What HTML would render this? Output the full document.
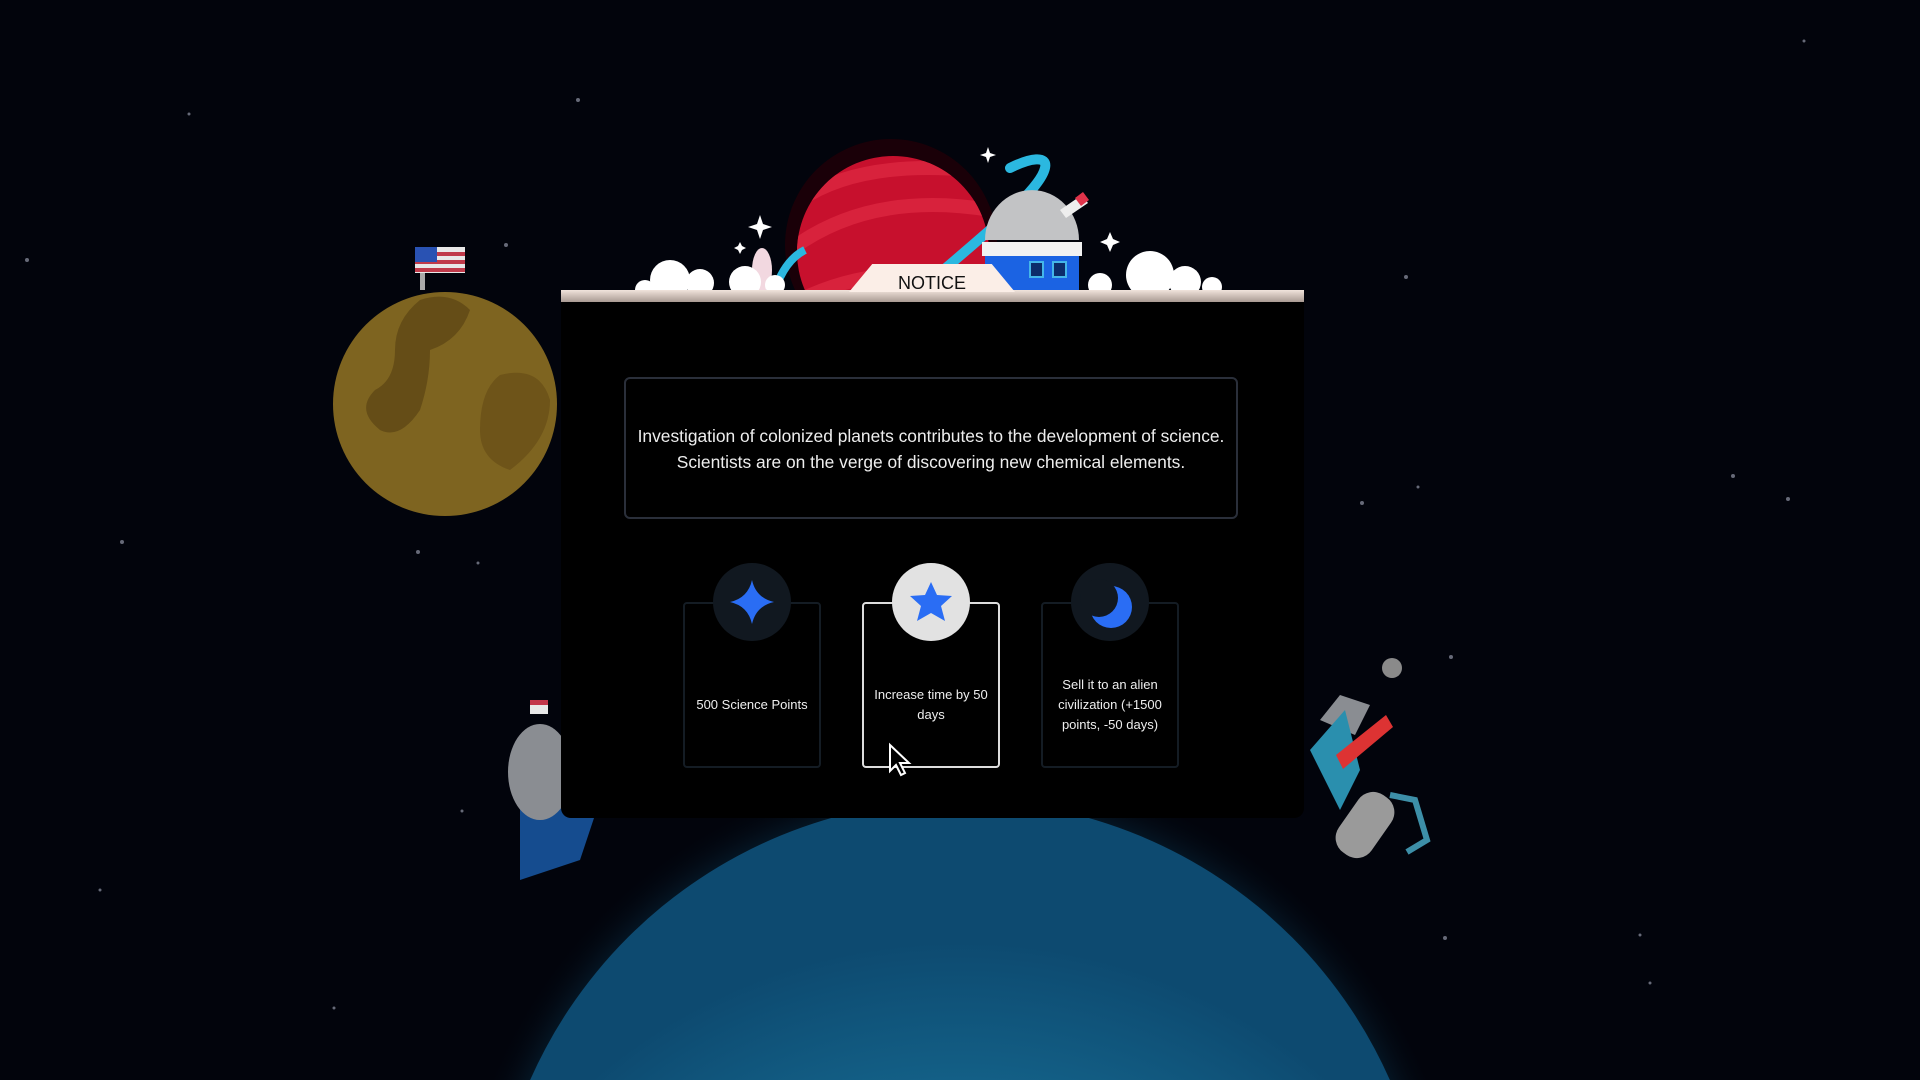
<!DOCTYPE html>
<html><head><meta charset="utf-8"><style>
html,body{margin:0;padding:0;width:1920px;height:1080px;overflow:hidden;background:#02040c;font-family:"Liberation Sans",sans-serif;position:relative}
svg{position:absolute;left:0;top:0;display:block}
.modal{position:absolute;left:561px;top:302px;width:743px;height:516px;background:#000;border-radius:0 0 10px 10px}
.bar{position:absolute;left:561px;top:290px;width:743px;height:12px;background:linear-gradient(#f1e4dc,#a99a92)}
.tab{position:absolute;left:849px;top:264px;width:166px;height:28px;background:#fbeee7;clip-path:polygon(14% 0,86% 0,100% 100%,0 100%);text-align:center;font-size:18px;line-height:38px;color:#111}
.text{position:absolute;left:624px;top:377px;width:614px;height:142px;border:2px solid #2a2f3a;border-radius:6px;box-sizing:border-box;color:#eee;font-size:17.4px;line-height:26px;text-align:center;padding-top:44px}
.card{position:absolute;top:602px;width:138px;height:166px;border:2px solid #141c24;border-radius:4px;box-sizing:border-box;color:#eee;font-size:13px;line-height:20px;text-align:center;display:flex;align-items:center;justify-content:center;padding:40px 8px 0}
.card.sel{border-color:#ddd}
.circ{position:absolute;top:563px;width:78px;height:78px;border-radius:50%;background:#111820}
</style></head><body>
<svg width="1920" height="1080" viewBox="0 0 1920 1080">
<defs><radialGradient id="eg" cx="50%" cy="75%" r="60%"><stop offset="0.3" stop-color="#1e86ae"/><stop offset="1" stop-color="#0d4a70"/></radialGradient>
<radialGradient id="gl"><stop offset="0.88" stop-color="#0b3a55" stop-opacity=".7"/><stop offset="1" stop-color="#02040c" stop-opacity="0"/></radialGradient>
<clipPath id="pc"><circle cx="893" cy="252" r="96"/></clipPath></defs>
<g fill="#666a78">
<circle cx="27" cy="260" r="2"/><circle cx="189" cy="114" r="1.5"/><circle cx="578" cy="100" r="2"/><circle cx="506" cy="245" r="2"/><circle cx="122" cy="542" r="2"/><circle cx="418" cy="552" r="2"/><circle cx="100" cy="890" r="1.5"/><circle cx="1804" cy="41" r="1.5"/><circle cx="1733" cy="476" r="2"/><circle cx="1788" cy="499" r="2"/><circle cx="1362" cy="503" r="2"/><circle cx="1406" cy="277" r="2"/><circle cx="1445" cy="938" r="2"/><circle cx="1640" cy="935" r="1.5"/><circle cx="1650" cy="983" r="1.5"/><circle cx="1418" cy="487" r="1.5"/><circle cx="1451" cy="657" r="2"/><circle cx="478" cy="563" r="1.5"/><circle cx="462" cy="811" r="1.5"/><circle cx="334" cy="1008" r="1.5"/>
</g>
<circle cx="960" cy="1270" r="510" fill="url(#gl)"/>
<circle cx="960" cy="1270" r="470" fill="url(#eg)"/>
<path d="M520 790 l40 -30 40 40 -20 60 -60 20z" fill="#1a5fb0" opacity=".8"/>
<ellipse cx="540" cy="772" rx="32" ry="48" fill="#8a8d92"/>
<rect x="530" y="700" width="18" height="14" fill="#e8e8e8"/><rect x="530" y="700" width="18" height="5" fill="#c3364a"/>
<path d="M1320 720 l20 -25 30 10 -15 30z" fill="#8a8d92"/>
<path d="M1310 750 l35 -40 15 60 -20 40z" fill="#2a8fae"/>
<path d="M1336 755 l50 -40 7 12 -50 42z" fill="#d33"/>
<rect x="1345" y="790" width="40" height="70" rx="18" transform="rotate(35 1365 825)" fill="#9a9a9a"/>
<path d="M1390 795 l25 5 12 40 -20 12" stroke="#3d8fa8" stroke-width="6" fill="none"/>
<circle cx="1392" cy="668" r="10" fill="#8a8a8a"/>
<circle cx="445" cy="404" r="112" fill="#7e6420"/>
<path d="M420 300 q30 -10 50 10 q-10 30 -40 40 q0 30 -10 60 q-20 30 -40 20 q-25 -20 -5 -40 q20 -10 20 -40 q0 -30 25 -50z" fill="#654d17"/>
<path d="M500 375 q40 -10 50 25 q0 40 -40 70 q-30 -10 -30 -40 q0 -40 20 -55z" fill="#6e5419"/>
<rect x="420" y="270" width="5" height="20" fill="#aaa"/>
<rect x="415" y="247" width="50" height="26" fill="#e8e8e8"/>
<g fill="#c03a4a"><rect x="415" y="252" width="50" height="4"/><rect x="415" y="260" width="50" height="4"/><rect x="415" y="268" width="50" height="4"/></g>
<rect x="415" y="247" width="22" height="15" fill="#2952b3"/>
<circle cx="891" cy="245" r="106" fill="#1a0008"/>
<circle cx="893" cy="252" r="96" fill="#c7102d"/>
<g clip-path="url(#pc)" fill="none" stroke="#d8223c" stroke-width="14"><path d="M790 250 q80 -60 200 -40"/><path d="M800 200 q60 -40 170 -30"/><path d="M800 300 q80 -40 190 -20"/></g>
<path d="M920 290 C990 230 1040 190 1045 168 C1048 155 1030 158 1010 168" stroke="#2bb8e0" stroke-width="10" fill="none" stroke-linecap="round"/>
<path d="M775 290 q10 -30 30 -40" stroke="#2bb8e0" stroke-width="8" fill="none"/>
<ellipse cx="762" cy="270" rx="10" ry="22" fill="#f2d8e0"/>
<path d="M985 240 a47 50 0 0 1 94 0z" fill="#c2c3c5"/>
<rect x="982" y="242" width="100" height="14" fill="#f2f2f2"/>
<rect x="985" y="256" width="94" height="34" fill="#1b63e3"/>
<rect x="1030" y="262" width="13" height="15" fill="#0c2c6a" stroke="#44b6e8" stroke-width="2"/><rect x="1053" y="262" width="13" height="15" fill="#0c2c6a" stroke="#44b6e8" stroke-width="2"/>
<path d="M1060 210 l22 -15 6 8 -22 15z" fill="#eee"/><path d="M1075 198 l8 -6 6 8 -8 6z" fill="#e0334a"/>
<g fill="#fff">
<circle cx="645" cy="290" r="10"/><circle cx="670" cy="280" r="20"/><circle cx="700" cy="283" r="14"/><circle cx="745" cy="282" r="16"/><circle cx="775" cy="285" r="10"/>
<circle cx="1100" cy="285" r="12"/><circle cx="1150" cy="275" r="24"/><circle cx="1185" cy="282" r="16"/><circle cx="1212" cy="287" r="10"/>
</g>
<g fill="#fff"><path d="M760 215 l3 9 9 3 -9 3 -3 9 -3 -9 -9 -3 9 -3z"/><path d="M988 147 l2 6 6 2 -6 2 -2 6 -2 -6 -6 -2 6 -2z"/><path d="M1110 232 l3 7 7 3 -7 3 -3 7 -3 -7 -7 -3 7 -3z"/><path d="M740 242 l2 4 4 2 -4 2 -2 4 -2 -4 -4 -2 4 -2z"/></g>
</svg>
<div class="modal"></div>
<div class="bar"></div>
<div class="tab">NOTICE</div>
<div class="text">Investigation of colonized planets contributes to the development of science.<br>Scientists are on the verge of discovering new chemical elements.</div>
<div class="card" style="left:683px">500 Science Points</div>
<div class="card sel" style="left:862px">Increase time by 50 days</div>
<div class="card" style="left:1041px">Sell it to an alien civilization (+1500 points, -50 days)</div>
<div class="circ" style="left:713px"></div>
<div class="circ" style="left:892px;background:#e2e2e2"></div>
<div class="circ" style="left:1071px"></div>
<svg width="1920" height="1080" viewBox="0 0 1920 1080" style="pointer-events:none">
<path d="M752 580 q4 18 22 22 q-18 4 -22 22 q-4 -18 -22 -22 q18 -4 22 -22z" fill="#2a6df4"/>
<path d="M931 582 l6 13 15 1 -11 10 4 15 -14 -8 -14 8 4 -15 -11 -10 15 -1z" fill="#2a6df4"/>
<circle cx="1111" cy="607" r="21" fill="#2a6df4"/>
<circle cx="1099" cy="598" r="19" fill="#111820"/>
<path d="M890 745 l0 26 6 -6 5 10 4 -2 -5 -10 9 0z" fill="#000" stroke="#fff" stroke-width="2"/>
</svg>
</body></html>
